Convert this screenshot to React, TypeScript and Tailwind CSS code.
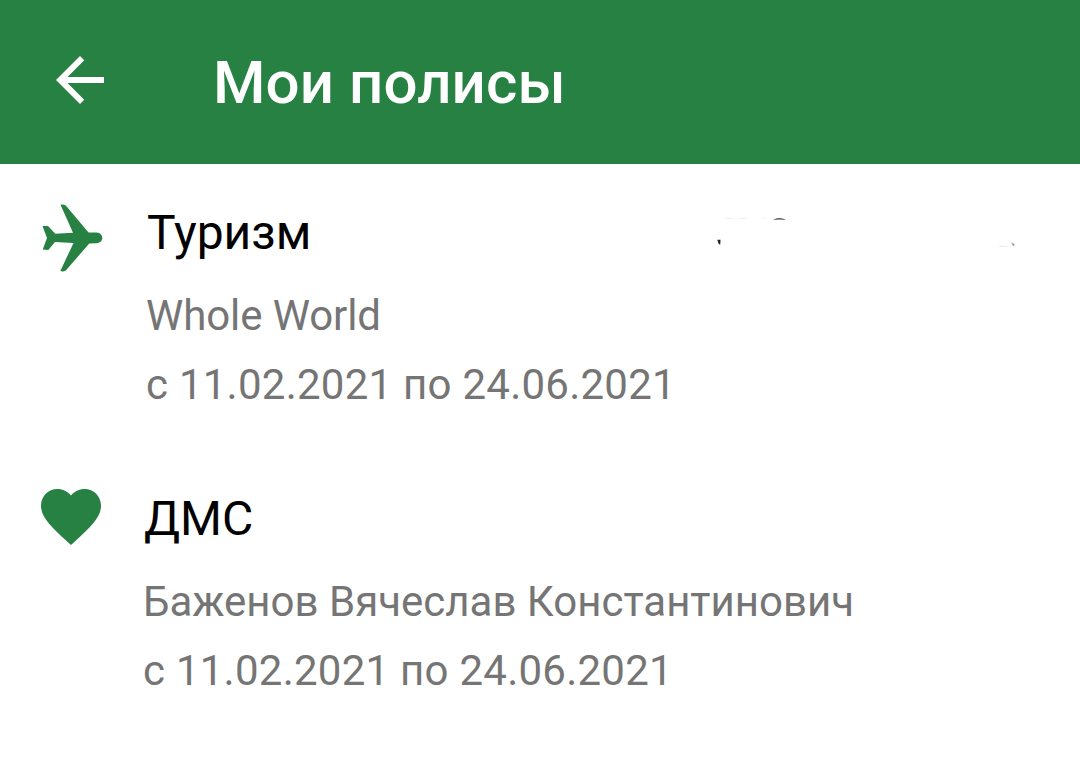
import clsx from "clsx";
import React from "react";

const BackIcon = () => (
  <svg className="mb-1 size-[72px]" viewBox="0 0 24 24" fill="currentColor">
    <path d="M20 11H7.83l5.59-5.59L12 4l-8 8 8 8 1.41-1.41L7.83 13H20v-2z" />
  </svg>
);

const PlaneIcon = () => (
  <svg className="h-[68px] w-[62px]" viewBox="0 0 62 68" fill="currentColor">
    <path d="M18.500.800Q21.500 0 23.800 1.600L46.500 28.500H54.500C58 28.700 60.300 31 60.300 34s-2.600 5-5.800 5.200l-7.200.200L23.800 66.500Q21 68 18.300 67L31.500 39l-18.500-1-6.700 7.900-5.600-.400 4.300-11.500L.5 22l5.500.100 7.300 7.700 17.700-1z" />
  </svg>
);

const HeartIcon = () => (
  <svg className="h-[56px] w-[60px]" viewBox="2 3 20 18.350" preserveAspectRatio="none" fill="currentColor">
    <path d="M12 21.350l-1.450-1.320C5.400 15.360 2 12.280 2 8.500 2 5.420 4.420 3 7.500 3c1.740 0 3.410.810 4.500 2.090C13.090 3.810 14.760 3 16.500 3 19.580 3 22 5.420 22 8.500c0 3.780-3.400 6.860-8.550 11.540L12 21.350z" />
  </svg>
);

// Leftover edges of the erased policy number
const ErasedNumber = () => (
  <svg className="mt-[50px] h-9 w-[304px]" viewBox="0 0 304 36" fill="none">
    <path d="M0.300 25.800h3.200l-.300 5-1.500-.800z" fill="#222222" />
    <path d="M8 4.500h8M22 4.500h8M45 4.500h3" stroke="#eeeeee" />
    <path d="M56 5.900Q62 2.200 69 5.900Q62 5.200 56 5.900z" fill="#555555" />
    <path d="M282 32.300h8" stroke="#e6e6e6" />
    <path d="M294 28.500l3.800 1.500-1.500 2.500z" fill="#a0a0a0" />
  </svg>
);

const policies = [
  {
    title: "Туризм",
    description: "Whole World",
    period: "с 11.02.2021 по 24.06.2021",
    icon: <PlaneIcon />,
    number: <ErasedNumber />,
    className: "pl-[42px]",
    iconClassName: "w-[104px] pt-10",
    descriptionClassName: "tracking-[-0.1px]",
  },
  {
    title: "ДМС",
    description: "Баженов Вячеслав Константинович",
    period: "с 11.02.2021 по 24.06.2021",
    icon: <HeartIcon />,
    number: null,
    className: "pl-[41px]",
    iconClassName: "w-[102px] pt-[39px]",
    descriptionClassName: "",
  },
];

const App = () => {
  return (
    <div className="h-[767px] w-[1080px] overflow-hidden bg-white font-[Roboto,sans-serif]">
      <header className="flex h-[164px] items-center bg-[#268142] pl-11 text-white">
        <BackIcon />
        <h1 className="mt-0.5 ml-[97px] text-[60px] leading-[72px] font-medium tracking-[0.1px]">
          Мои полисы
        </h1>
      </header>
      <main>
        {policies.map((policy) => (
          <section key={policy.title} className={clsx("flex h-[286px]", policy.className)}>
            <div className={clsx("shrink-0 text-[#268142]", policy.iconClassName)}>{policy.icon}</div>
            <div className="w-[571px] shrink-0 pt-[41px] whitespace-nowrap">
              <h2 className="pl-px text-[48px] leading-[56px] text-black">{policy.title}</h2>
              <p
                className={clsx(
                  "mt-[27px] text-[42px] leading-[56px] text-[#757575]",
                  policy.descriptionClassName
                )}
              >
                {policy.description}
              </p>
              <p className="mt-[13px] text-[42px] leading-[56px] tracking-[0.25px] text-[#757575]">
                {policy.period}
              </p>
            </div>
            {policy.number}
          </section>
        ))}
      </main>
    </div>
  );
};

export default App;
